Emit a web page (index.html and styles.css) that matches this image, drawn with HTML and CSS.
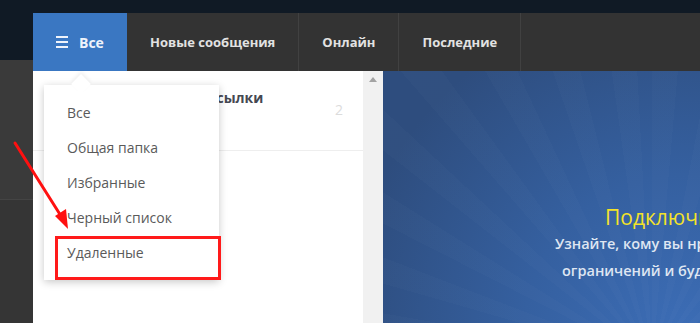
FILE: index.html
```html
<!DOCTYPE html>
<html lang="ru">
<head>
<meta charset="utf-8">
<link rel="stylesheet" href="styles.css">
</head>
<body>
<div class="topstrip"></div>
<div class="main">
  <div class="side"></div>
  <div class="app">
    <nav class="nav">
      <div class="tab active">
        <svg class="burger" width="12" height="12" viewBox="0 0 12 12"><rect x="0" y="0" width="12" height="2"/><rect x="0" y="5" width="12" height="2"/><rect x="0" y="10" width="12" height="2"/></svg>
        <span>Все</span>
      </div>
      <div class="tab">Новые сообщения</div>
      <div class="tab sep">Онлайн</div>
      <div class="tab sep">Последние</div>
      <div class="tab sep rest"></div>
    </nav>
    <div class="content">
      <div class="list">
        <div class="row">
          <div class="row-title">Рассылки</div>
          <div class="row-count">2</div>
        </div>
      </div>
      <div class="scrollbar"><span class="up"></span></div>
      <div class="promo">
        <div class="promo-text">
          <div class="p1">Подключите VIP-статус</div>
          <div class="p2">Узнайте, кому вы нравитесь</div>
          <div class="p3">ограничений и будьте на виду</div>
        </div>
      </div>
    </div>
    <div class="dropdown">
      <div class="item">Все</div>
      <div class="item">Общая папка</div>
      <div class="item">Избранные</div>
      <div class="item">Черный список</div>
      <div class="item">Удаленные</div>
    </div>
  </div>
</div>
<div class="highlight"></div>
<svg class="arrow" width="80" height="100" viewBox="0 0 80 100">
  <line x1="15" y1="13" x2="61" y2="86" stroke="#ff1010" stroke-width="3" stroke-linecap="round"/>
  <polygon points="68,99 55,86 66,79" fill="#ff1010"/>
</svg>
</body>
</html>
```
FILE: styles.css
```css
html, body {
  margin: 0;
  padding: 0;
  width: 700px;
  height: 323px;
  overflow: hidden;
  background: #333;
  font-family: "Open Sans", "Liberation Sans", sans-serif;
}
.topstrip {
  height: 13px;
  background: #101a25;
}
.main {
  display: flex;
  height: 310px;
}
.side {
  width: 33px;
  flex: none;
  background: linear-gradient(#101a25 0 47px, #3a3a3a 47px 186px, #444 186px 187px, #353535 187px);
}
.app {
  flex: 1;
  position: relative;
  display: flex;
  flex-direction: column;
  min-width: 0;
}
.nav {
  height: 58px;
  flex: none;
  display: flex;
  background: #333333;
}
.tab {
  display: flex;
  align-items: center;
  padding: 0 23px;
  color: #e2e2e2;
  font-size: 13px;
  font-weight: 700;
  white-space: nowrap;
}
.tab.sep {
  border-left: 1px solid #414141;
}
.tab.rest {
  flex: 1;
}
.tab.active {
  background: #3a77c2;
  color: #eef3fb;
  gap: 11px;
  font-size: 14px;
  width: 94px;
  box-sizing: border-box;
}
.burger {
  fill: #eef3fb;
  flex: none;
}
.content {
  flex: 1;
  display: flex;
}
.list {
  width: 330px;
  flex: none;
  background: #fff;
}
.row {
  height: 80px;
  border-bottom: 1px solid #eeeeee;
  display: flex;
  justify-content: space-between;
  padding: 17px 20px 0 159px;
  box-sizing: border-box;
}
.row-title {
  font-size: 14px;
  font-weight: 700;
  color: #454852;
}
.row-count {
  font-size: 14px;
  color: #dcdcdc;
  padding-top: 12px;
}
.scrollbar {
  width: 20px;
  flex: none;
  background: #f1f1f1;
  display: flex;
  justify-content: center;
  padding-top: 6px;
  box-sizing: border-box;
}
.up {
  width: 0;
  height: 0;
  border-left: 4px solid transparent;
  border-right: 4px solid transparent;
  border-bottom: 5px solid #a3a3a3;
}
.promo {
  flex: 1;
  background:
    repeating-conic-gradient(from 0deg at 85% 115%, rgba(255,255,255,0.014) 0deg 5deg, rgba(255,255,255,0) 5deg 11deg),
    radial-gradient(circle at 95% 105%, #3c6db6 0%, #3560a0 40%, #2e4d7e 85%);
  overflow: hidden;
}
.promo-text {
  padding: 132px 0 0 172px;
  white-space: nowrap;
}
.p1 {
  color: #f3e22a;
  font-size: 21px;
  line-height: 28px;
  padding-left: 50px;
}
.p2 {
  color: #dfe6f2;
  font-size: 14.5px;
  font-weight: 600;
  line-height: 26px;
}
.p3 {
  color: #dfe6f2;
  font-size: 14.5px;
  font-weight: 600;
  line-height: 28px;
  padding-left: 7px;
}
.dropdown {
  position: absolute;
  left: 11px;
  top: 72px;
  width: 175px;
  background: #fff;
  box-shadow: 0 2px 8px rgba(0,0,0,0.22);
  padding: 10px 0;
  box-sizing: border-box;
}
.dropdown::before {
  content: "";
  position: absolute;
  left: 30px;
  top: -8px;
  width: 14px;
  height: 14px;
  background: #fff;
  transform: rotate(45deg);
  box-shadow: -2px -2px 4px rgba(0,0,0,0.06);
}
.item {
  position: relative;
  height: 35px;
  line-height: 35px;
  padding-left: 23px;
  font-size: 14px;
  color: #5a5a5a;
}
.highlight {
  position: absolute;
  left: 55px;
  top: 236px;
  width: 166px;
  height: 44px;
  box-sizing: border-box;
  border: 3px solid #ff1a1a;
}
.arrow {
  position: absolute;
  left: 0;
  top: 130px;
}
```
